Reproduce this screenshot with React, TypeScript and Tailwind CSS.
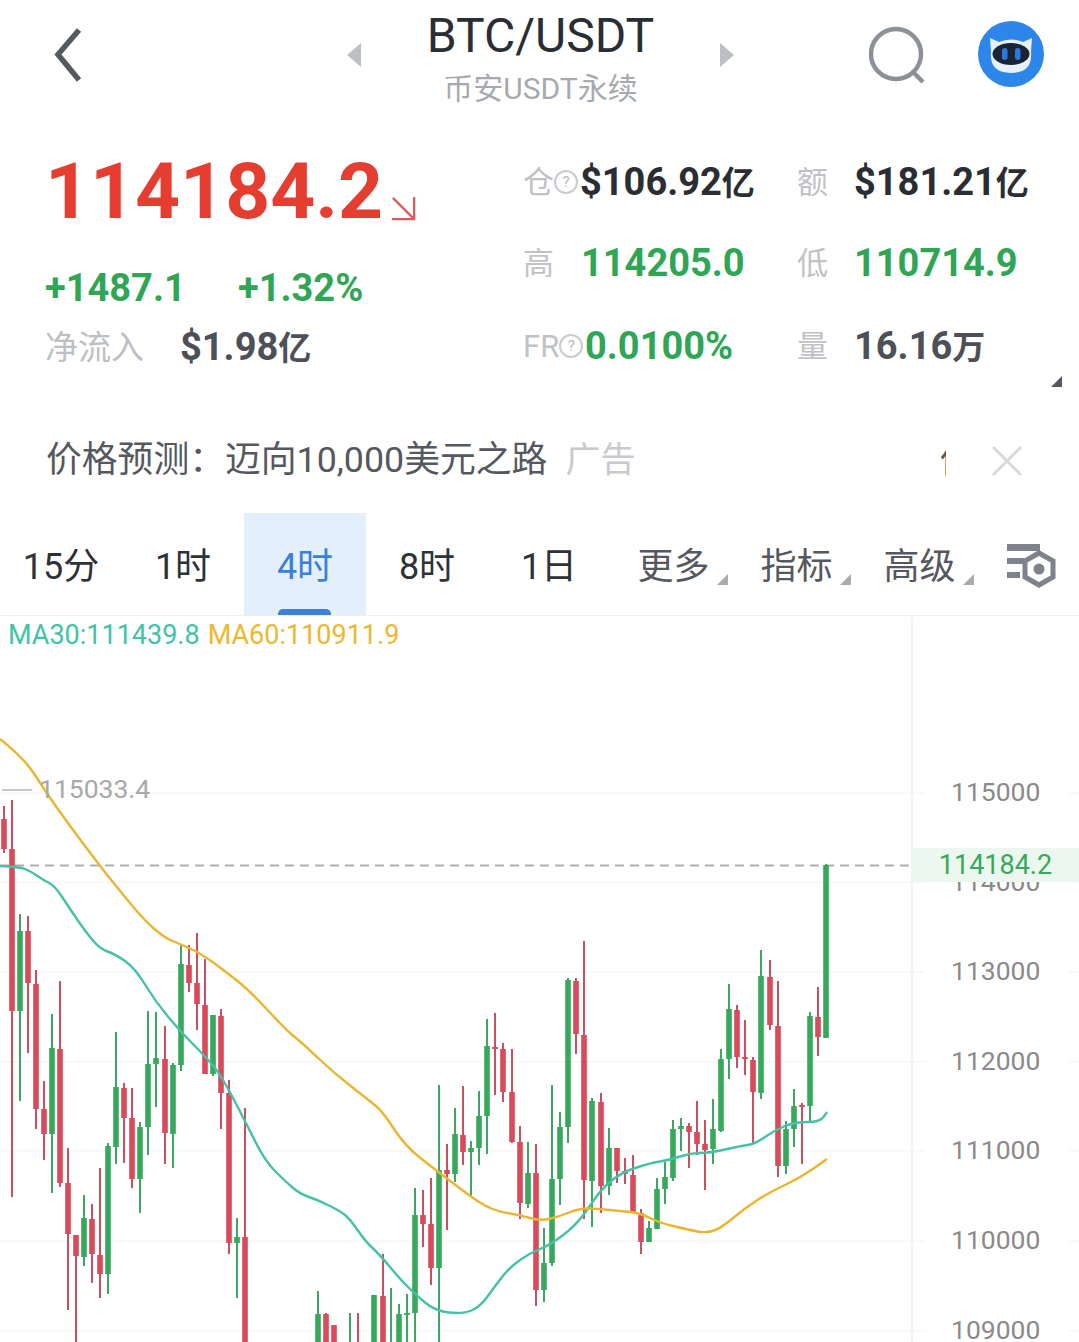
import React from "react";

type C = [number, number, number, number, number, "r" | "g"];

const candles: C[] = [
  [4, 805, 818, 848, 852, "r"], [12, 799, 848, 1010, 1196, "r"], [20, 913, 930, 1010, 1100, "g"], [28, 915, 930, 982, 1052, "r"],
  [36, 969, 983, 1108, 1128, "r"], [44, 1080, 1108, 1133, 1159, "r"], [52, 1013, 1047, 1133, 1192, "g"], [60, 980, 1048, 1182, 1186, "r"],
  [68, 1147, 1182, 1233, 1309, "r"], [76, 1234, 1234, 1255, 1342, "r"], [84, 1194, 1217, 1256, 1265, "g"], [92, 1203, 1218, 1253, 1282, "r"],
  [100, 1167, 1254, 1273, 1297, "r"], [108, 1142, 1145, 1273, 1293, "g"], [116, 1031, 1086, 1146, 1163, "g"], [124, 1082, 1087, 1117, 1162, "r"],
  [132, 1087, 1117, 1178, 1187, "r"], [140, 1121, 1126, 1178, 1212, "g"], [148, 1010, 1063, 1126, 1154, "g"], [156, 1011, 1057, 1063, 1106, "g"],
  [165, 1025, 1058, 1132, 1163, "r"], [173, 1062, 1064, 1133, 1167, "g"], [181, 943, 963, 1064, 1070, "g"], [189, 944, 964, 982, 991, "r"],
  [197, 932, 982, 1003, 1029, "r"], [205, 958, 1004, 1073, 1073, "r"], [213, 1014, 1014, 1073, 1075, "g"], [221, 1008, 1015, 1092, 1128, "r"],
  [229, 1079, 1092, 1242, 1253, "r"], [237, 1217, 1236, 1242, 1297, "g"], [245, 1107, 1236, 1342, 1342, "r"],
  [318, 1290, 1313, 1342, 1342, "g"], [326, 1312, 1313, 1342, 1342, "r"], [334, 1324, 1324, 1342, 1342, "r"],
  [350, 1312, 1341, 1342, 1342, "g"], [358, 1312, 1341, 1342, 1342, "r"], [374, 1294, 1294, 1342, 1342, "g"], [383, 1253, 1295, 1342, 1342, "r"],
  [391, 1287, 1342, 1342, 1342, "g"], [399, 1303, 1313, 1342, 1342, "g"], [407, 1293, 1312, 1313, 1342, "g"], [415, 1187, 1214, 1312, 1342, "g"],
  [423, 1189, 1214, 1223, 1246, "r"], [431, 1177, 1223, 1267, 1284, "r"], [439, 1084, 1169, 1267, 1342, "g"], [447, 1143, 1169, 1173, 1229, "r"],
  [455, 1107, 1133, 1173, 1181, "g"], [463, 1085, 1134, 1151, 1164, "r"], [471, 1140, 1147, 1151, 1196, "g"], [479, 1090, 1115, 1147, 1164, "g"],
  [487, 1018, 1045, 1115, 1153, "g"], [495, 1012, 1046, 1048, 1094, "r"], [503, 1042, 1048, 1091, 1101, "r"], [512, 1048, 1091, 1141, 1142, "r"],
  [520, 1125, 1141, 1202, 1218, "r"], [528, 1141, 1172, 1203, 1207, "g"], [536, 1143, 1172, 1289, 1305, "r"], [544, 1227, 1262, 1289, 1301, "g"],
  [552, 1084, 1178, 1262, 1265, "g"], [560, 1111, 1126, 1178, 1204, "g"], [568, 977, 979, 1126, 1142, "g"], [576, 977, 980, 1033, 1053, "r"],
  [584, 940, 1034, 1179, 1218, "r"], [592, 1097, 1100, 1180, 1226, "g"], [601, 1092, 1101, 1185, 1212, "r"], [609, 1127, 1147, 1185, 1194, "g"],
  [617, 1147, 1147, 1170, 1182, "r"], [625, 1157, 1170, 1173, 1183, "r"], [633, 1154, 1174, 1212, 1212, "r"], [641, 1208, 1212, 1241, 1253, "r"],
  [649, 1220, 1227, 1241, 1241, "g"], [657, 1177, 1188, 1228, 1228, "g"], [665, 1161, 1176, 1188, 1203, "g"], [673, 1119, 1128, 1177, 1180, "g"],
  [681, 1117, 1125, 1128, 1150, "g"], [689, 1122, 1125, 1131, 1167, "r"], [697, 1100, 1131, 1143, 1154, "r"], [705, 1119, 1143, 1149, 1189, "r"],
  [713, 1098, 1128, 1148, 1163, "g"], [721, 1048, 1058, 1130, 1131, "g"], [729, 983, 1008, 1058, 1078, "g"], [737, 1004, 1009, 1056, 1067, "r"],
  [745, 1019, 1056, 1058, 1074, "r"], [753, 1056, 1059, 1091, 1143, "r"], [761, 949, 975, 1092, 1098, "g"], [770, 959, 976, 1024, 1029, "r"],
  [778, 980, 1025, 1165, 1176, "r"], [786, 1120, 1128, 1165, 1173, "g"], [794, 1088, 1105, 1128, 1146, "g"], [802, 1102, 1104, 1106, 1163, "r"],
  [810, 1011, 1015, 1105, 1120, "g"], [818, 986, 1016, 1036, 1055, "r"], [826, 863, 864, 1037, 1037, "g"],
];

const ma30 =
  "0,865 20,866 30,870 45,880 55,885 70,908 85,930 100,948 115,953 135,967 155,1000 180,1030 200,1050 220,1072 245,1120 265,1160 285,1180 300,1193 318,1199 340,1210 350,1218 365,1240 380,1254 400,1278 415,1293 435,1310 463,1313 480,1306 495,1285 510,1266 530,1252 550,1244 575,1225 590,1205 600,1190 620,1172 650,1162 670,1159 690,1152 710,1152 740,1145 755,1143 775,1129 795,1121 820,1121 827,1111";
const ma60 =
  "0,738 25,758 45,790 70,825 100,865 120,890 145,920 165,937 180,943 200,952 225,970 250,990 287,1030 300,1040 335,1073 370,1100 383,1111 405,1145 437,1170 470,1195 485,1205 500,1211 520,1214 540,1220 558,1216 580,1207 600,1208 620,1210 640,1212 660,1222 690,1229 705,1232 720,1228 745,1207 770,1191 800,1177 827,1158";

function smooth(points: string) {
  const p = points.split(" ").map((s) => s.split(",").map(Number));
  let d = `M${p[0][0]} ${p[0][1]}`;
  for (let i = 1; i < p.length - 1; i++) {
    const mx = (p[i][0] + p[i + 1][0]) / 2;
    const my = (p[i][1] + p[i + 1][1]) / 2;
    d += `Q${p[i][0]} ${p[i][1]} ${mx} ${my}`;
  }
  const l = p[p.length - 1];
  return `${d}L${l[0]} ${l[1]}`;
}

const gridYs = [792, 881, 971, 1061, 1150, 1240, 1330];
const axis: [string, string][] = [
  ["115000", "top-[160px]"],
  ["114000", "top-[250px]"],
  ["113000", "top-[339px]"],
  ["112000", "top-[429px]"],
  ["111000", "top-[518px]"],
  ["110000", "top-[608px]"],
  ["109000", "top-[698px]"],
];

function Hint() {
  return (
    <span className="flex h-[24px] w-[24px] shrink-0 items-center justify-center rounded-full border-2 border-[#c9cbce] text-[15px] leading-none text-[#b8babd]">
      ?
    </span>
  );
}

function Tab({ label, active, menu }: { label: string; active?: boolean; menu?: boolean }) {
  return (
    <div
      className={`relative flex h-full shrink-0 items-center justify-center pt-[5px] ${menu ? "w-[123px] pl-[4px]" : "w-[122px]"} ${
        active ? "bg-[#e3f0fb] text-[#3b7fd9]" : menu ? "text-[#55585e]" : "text-[#2e3136]"
      }`}
    >
      <span className="text-[36px] leading-none">{label}</span>
      {menu && (
        <svg className="absolute bottom-[30px] right-[5px]" width="11" height="11" viewBox="0 0 11 11">
          <path d="M11 0V11H0Z" fill="#a9abae" />
        </svg>
      )}
      {active && <div className="absolute bottom-0 left-[34px] h-[6px] w-[53px] rounded-t-[5px] bg-[#3d80da]" />}
    </div>
  );
}

function Stat({
  label,
  hint,
  value,
  unit,
  color,
  w,
}: {
  label: string;
  hint?: boolean;
  value: string;
  unit?: string;
  color: string;
  w: string;
}) {
  return (
    <div className="flex items-center">
      <div className={`flex shrink-0 items-center ${w}`}>
        <span className="text-[31px] leading-none text-[#c0c2c5]">{label}</span>
        {hint && <Hint />}
      </div>
      <span className={`text-[38px] font-bold leading-none ${color}`}>
        {value}
        {unit && <span className="text-[33px]">{unit}</span>}
      </span>
    </div>
  );
}

export default function App() {
  return (
    <div className="h-[1342px] w-[1079px] overflow-hidden bg-white font-[Roboto,'Noto_Sans_CJK_SC',sans-serif]">
      <header className="flex h-[112px] items-start pl-[54px]">
        <svg className="mt-[28px]" width="28" height="54" viewBox="0 0 28 54" fill="none">
          <path d="M25 2 4 26.5 25 52" stroke="#555a60" strokeWidth="5.5" />
        </svg>
        <svg className="ml-[265px] mt-[43px]" width="14" height="24" viewBox="0 0 14 24">
          <path d="M14 0V24L0 12Z" fill="#bcc0c5" />
        </svg>
        <div className="flex w-[359px] flex-col items-center">
          <span className="mt-[9px] text-[48px] leading-[54px] text-[#2a2d33]">BTC/USDT</span>
          <span className="mt-[7px] text-[30px] leading-[38px] text-[#a6aaaf]">币安USDT永续</span>
        </div>
        <svg className="mt-[43px]" width="14" height="24" viewBox="0 0 14 24">
          <path d="M0 0V24L14 12Z" fill="#bcc0c5" />
        </svg>
        <svg className="ml-[135px] mt-[26px]" width="56" height="58" viewBox="0 0 56 58" fill="none">
          <circle cx="27" cy="28" r="25" stroke="#8c9197" strokeWidth="4.5" />
          <path d="M44 46 54 56" stroke="#8c9197" strokeWidth="4.5" />
        </svg>
        <svg className="ml-[53px] mt-[21px]" width="66" height="66" viewBox="0 0 66 66">
          <circle cx="33" cy="33" r="33" fill="#2d86ea" />
          <path d="M12 17 21 21Q33 16 45 21L54 17 53 31Q55 52 33 52 11 52 13 31Z" fill="#e6f1fb" />
          <ellipse cx="33" cy="33" rx="18.5" ry="11" fill="#1a2433" />
          <rect x="24" y="27" width="5.5" height="12" rx="2.7" fill="#2d78e0" />
          <rect x="37" y="27" width="5.5" height="12" rx="2.7" fill="#2d78e0" />
        </svg>
      </header>

      <section className="relative flex h-[300px]">
        <div className="flex w-[523px] shrink-0 flex-col pl-[45px]">
          <div className="mt-[32px] flex items-end">
            <span className="text-[78.5px] font-bold leading-[94px] text-[#e53e31]">114184.2</span>
            <svg className="mb-[17px] ml-[8px]" width="25" height="25" viewBox="0 0 27 27" fill="none">
              <path d="M2 2 25 25M1 25H25V1" stroke="#de5a5e" strokeWidth="2.5" />
            </svg>
          </div>
          <div className="mt-[28px] flex text-[38px] font-bold leading-[44px] text-[#2fa655]">
            <span className="w-[193px]">+1487.1</span>
            <span>+1.32%</span>
          </div>
          <div className="mt-[18px] flex items-center">
            <span className="w-[135px] text-[33px] leading-none text-[#bdbfc2]">净流入</span>
            <span className="text-[38px] font-bold leading-none text-[#4d5056]">
              $1.98<span className="text-[33px]">亿</span>
            </span>
          </div>
        </div>
        <div className="flex flex-col">
          <div className="mt-[51px] flex">
            <div className="w-[274px]"><Stat label="仓" hint value="$106.92" unit="亿" color="text-[#2a2d33]" w="w-[57px]" /></div>
            <Stat label="额" value="$181.21" unit="亿" color="text-[#2a2d33]" w="w-[57px]" />
          </div>
          <div className="mt-[43px] flex">
            <div className="w-[274px]"><Stat label="高" value="114205.0" color="text-[#2fa655]" w="w-[58px]" /></div>
            <Stat label="低" value="110714.9" color="text-[#2fa655]" w="w-[57px]" />
          </div>
          <div className="mt-[45px] flex">
            <div className="w-[274px]"><Stat label="FR" hint value="0.0100%" color="text-[#2fa655]" w="w-[62px]" /></div>
            <Stat label="量" value="16.16" unit="万" color="text-[#4d5056]" w="w-[57px]" />
          </div>
        </div>
        <svg className="absolute bottom-[25px] right-[17px]" width="11" height="11" viewBox="0 0 11 11">
          <path d="M11 0V11H0Z" fill="#55585e" />
        </svg>
      </section>

      <div className="flex h-[101px] items-center pb-[4px] pl-[46px]">
        <span className="text-[35.8px] leading-none text-[#55585e]">价格预测：迈向10,000美元之路</span>
        <span className="ml-[18px] text-[35px] leading-none text-[#c8cacd]">广告</span>
        <div className="ml-[304px] h-[36px] w-[7px] overflow-hidden text-[36px] leading-none text-[#55585e]">价</div>
        <svg className="ml-[45px]" width="32" height="32" viewBox="0 0 32 32" fill="none">
          <path d="M2 2 30 30M30 2 2 30" stroke="#d6d9db" strokeWidth="3" />
        </svg>
      </div>

      <nav className="flex h-[102px] items-center">
        <Tab label="15分" />
        <Tab label="1时" />
        <Tab label="4时" active />
        <Tab label="8时" />
        <Tab label="1日" />
        <Tab label="更多" menu />
        <Tab label="指标" menu />
        <Tab label="高级" menu />
        <svg className="ml-[27px] mt-[4px]" width="50" height="44" viewBox="0 0 50 44">
          <path d="M1 0H34V7H1ZM1 14H18V20H1ZM1 28H14V34H1Z" fill="#7d828b" />
          <path d="M33 9 47 17V33L33 41 19 33V17Z" fill="none" stroke="#7d828b" strokeWidth="5" />
          <circle cx="33" cy="25" r="5.5" fill="#7d828b" />
        </svg>
      </nav>

      <div className="relative h-[727px] border-t border-[#f0f0f0]">
        <svg className="absolute left-0 top-0" width="1079" height="727" viewBox="0 615 1079 727" fill="none">
          {gridYs.map((y) => (
            <path key={y} d={`M0 ${y}H925M1068 ${y}H1079`} stroke="#f7f7f7" strokeWidth="1.5" />
          ))}
          <path d="M912 616V1342" stroke="#f1f1f1" strokeWidth="1.5" />
          <path d="M0 864.5H911" stroke="#b0b0b0" strokeWidth="2" strokeDasharray="9 6" />
          <path d="M2 789H32" stroke="#b5b5b5" strokeWidth="1.5" />
          {candles.map(([x, t, bt, bb, b, c], i) => {
            const col = c === "r" ? "#d94a5b" : "#37a95c";
            return (
              <g key={i}>
                <path d={`M${x} ${t}V${b}`} stroke={c === "r" ? "#c9505f" : "#3fa562"} strokeWidth="2" />
                <rect x={x - 2.8} y={bt} width="5.6" height={Math.max(bb - bt, 2)} fill={col} />
              </g>
            );
          })}
          <path d={smooth(ma30)} stroke="#45c2a6" strokeWidth="2.4" strokeLinejoin="round" />
          <path d={smooth(ma60)} stroke="#eab62f" strokeWidth="2.4" strokeLinejoin="round" />
        </svg>

        <div className="absolute left-[8px] top-[4px] flex gap-[8px] text-[27px] leading-[30px]">
          <span className="text-[#41c3a6]">MA30:111439.8</span>
          <span className="text-[#ebb82f]">MA60:110911.9</span>
        </div>
        <span className="absolute left-[39px] top-[157px] text-[26.5px] leading-[32px] text-[#a8a8a8]">115033.4</span>

        {axis.map(([v, pos]) => (
          <span key={v} className={`absolute left-[951px] text-[26.5px] leading-[32px] text-[#8a8a8a] ${pos}`}>
            {v}
          </span>
        ))}
        <div className="absolute left-[912px] top-[232px] flex h-[34px] w-[167px] items-center justify-center bg-[#ecf7ef] text-[27px] leading-none text-[#37a95c]">
          114184.2
        </div>
      </div>
    </div>
  );
}
